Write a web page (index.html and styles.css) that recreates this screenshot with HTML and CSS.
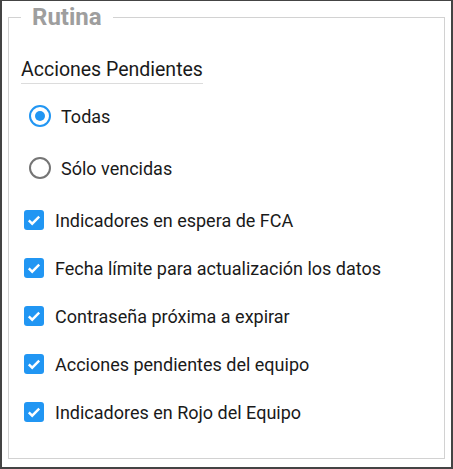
FILE: index.html
```html
<!DOCTYPE html>
<html lang="es">
<head>
<meta charset="utf-8">
<link rel="stylesheet" href="styles.css">
</head>
<body>
<div class="frame">
  <fieldset class="panel">
    <legend class="panel-title">Rutina</legend>
    <div class="section-title">Acciones Pendientes</div>
    <div class="radios">
      <div class="radio-row"><span class="radio checked"></span><span class="label">Todas</span></div>
      <div class="radio-row"><span class="radio"></span><span class="label">Sólo vencidas</span></div>
    </div>
    <div class="checks">
      <div class="check-row"><span class="checkbox"><svg viewBox="0 0 20 20" width="20" height="20"><path d="M4.8 10.3l3.4 3.4 7-7" fill="none" stroke="#fff" stroke-width="2.4"/></svg></span><span class="label">Indicadores en espera de FCA</span></div>
      <div class="check-row"><span class="checkbox"><svg viewBox="0 0 20 20" width="20" height="20"><path d="M4.8 10.3l3.4 3.4 7-7" fill="none" stroke="#fff" stroke-width="2.4"/></svg></span><span class="label">Fecha límite para actualización los datos</span></div>
      <div class="check-row"><span class="checkbox"><svg viewBox="0 0 20 20" width="20" height="20"><path d="M4.8 10.3l3.4 3.4 7-7" fill="none" stroke="#fff" stroke-width="2.4"/></svg></span><span class="label">Contraseña próxima a expirar</span></div>
      <div class="check-row"><span class="checkbox"><svg viewBox="0 0 20 20" width="20" height="20"><path d="M4.8 10.3l3.4 3.4 7-7" fill="none" stroke="#fff" stroke-width="2.4"/></svg></span><span class="label">Acciones pendientes del equipo</span></div>
      <div class="check-row"><span class="checkbox"><svg viewBox="0 0 20 20" width="20" height="20"><path d="M4.8 10.3l3.4 3.4 7-7" fill="none" stroke="#fff" stroke-width="2.4"/></svg></span><span class="label">Indicadores en Rojo del Equipo</span></div>
    </div>
  </fieldset>
</div>
</body>
</html>
```
FILE: styles.css
```css
* { box-sizing: border-box; }
html, body { margin: 0; padding: 0; background: #fff; }
body { font-family: Roboto, "Liberation Sans", sans-serif; color: #1a1a1a; }
.frame {
  width: 453px;
  height: 469px;
  border: 2px solid #444;
  border-top-width: 1px;
  padding: 2px 6px 8px 6px;
  display: flex;
}
.panel {
  flex: 1;
  margin: 0;
  border: 1px solid #d2d2d2;
  padding: 0 12px 0 12px;
  min-width: 0;
}
.panel-title {
  padding: 0 11px;
  font-size: 24px;
  line-height: 28px;
  font-weight: 700;
  color: #9e9e9e;
}
.section-title {
  display: inline-block;
  margin-top: 27px;
  font-size: 19.5px;
  line-height: 24px;
  padding-bottom: 1px;
  border-bottom: 1px solid #dcdcdc;
}
.radios { margin-top: 6px; }
.radio-row {
  height: 52px;
  display: flex;
  align-items: center;
  padding-left: 8px;
  gap: 10px;
}
.radio {
  width: 22px;
  height: 22px;
  border-radius: 50%;
  border: 2px solid #757575;
  display: flex;
  align-items: center;
  justify-content: center;
}
.radio.checked { border-color: #2196f3; }
.radio.checked::after {
  content: "";
  width: 10px;
  height: 10px;
  border-radius: 50%;
  background: #2196f3;
}
.checks { margin-top: 2px; }
.check-row {
  height: 48px;
  display: flex;
  align-items: center;
  padding-left: 3px;
  gap: 11px;
}
.checkbox {
  width: 20px;
  height: 20px;
  border-radius: 3px;
  background: #2196f3;
  display: block;
}
.checkbox svg { display: block; }
.label { font-size: 18px; }
```
